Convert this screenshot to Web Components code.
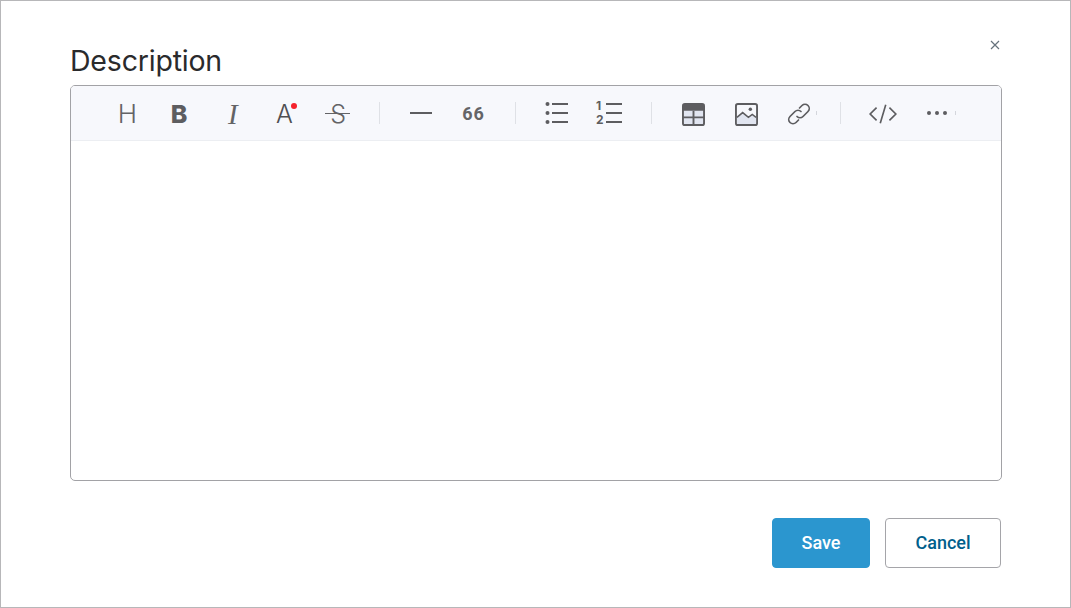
<!DOCTYPE html>
<html lang="en">
<head>
<meta charset="utf-8">
<title>Description</title>
<style>
  html, body { margin: 0; background: #fff; }
</style>
</head>
<body>
<edit-dialog heading="Description">
  <rich-editor></rich-editor>
  <action-button slot="actions" kind="primary">Save</action-button>
  <action-button slot="actions">Cancel</action-button>
</edit-dialog>

<script>
customElements.define(
  "edit-dialog",
  class EditDialog extends HTMLElement {
    constructor() {
      super();
      this.attachShadow({mode: "open"});
    }

    connectedCallback() {
      this.shadowRoot.innerHTML = `
      <style>
        :host {
            display: block;
            position: relative;
            box-sizing: border-box;
            width: 1071px;
            height: 608px;
            padding: 0 69px;
            border: 1px solid #b7b7b9;
            background: #fff;
        }

        .dialog__title {
            margin: 0;
            padding-top: 42px;
            height: 42px;
            font: 400 28.5px/36px Inter, sans-serif;
            letter-spacing: -0.2px;
            color: #2a2a2c;
        }

        .dialog__close {
            position: absolute;
            top: 37px;
            right: 70px;
            width: 10px;
            height: 10px;
            padding: 0;
            border: 0;
            background: none;
        }

        .dialog__actions {
            display: flex;
            justify-content: flex-end;
            gap: 15px;
            margin-top: 37px;
        }
      </style>
      <h1 class="dialog__title">${this.getAttribute("heading")}</h1>
      <button class="dialog__close" aria-label="Close">
        <svg width="10" height="10" viewBox="0 0 10 10" fill="none" stroke="#66727c" stroke-width="1.2">
          <path d="M1 1l8 8M9 1l-8 8"/>
        </svg>
      </button>
      <slot></slot>
      <div class="dialog__actions"><slot name="actions"></slot></div>
      `;
    }
  }
);

customElements.define(
  "tool-button",
  class ToolButton extends HTMLElement {
    constructor() {
      super();
      this.attachShadow({mode: "open"});
    }

    connectedCallback() {
      this.shadowRoot.innerHTML = `
      <style>
        :host {
            display: flex;
            position: relative;
            flex: 0 0 32.7px;
            height: 32px;
            align-items: center;
            justify-content: center;
            color: #5d5d60;
        }
        :host([low]) { padding-top: 2px; box-sizing: border-box; }
        :host([tick])::after {
            content: "";
            position: absolute;
            top: 14px;
            right: -2px;
            width: 1px;
            height: 4px;
            background: #d4d6dc;
        }
      </style>
      <slot></slot>
      `;
    }
  }
);

customElements.define(
  "tool-separator",
  class ToolSeparator extends HTMLElement {
    constructor() {
      super();
      this.attachShadow({mode: "open"});
    }

    connectedCallback() {
      this.shadowRoot.innerHTML = `
      <style>
        :host {
            display: block;
            flex: 0 0 1px;
            height: 22px;
            margin: 0 5px;
            background: #dfe1e6;
        }
      </style>
      `;
    }
  }
);

customElements.define(
  "rich-editor",
  class RichEditor extends HTMLElement {
    constructor() {
      super();
      this.attachShadow({mode: "open"});
    }

    connectedCallback() {
      this.shadowRoot.innerHTML = `
      <style>
        :host {
            display: block;
            box-sizing: border-box;
            width: 932px;
            height: 396px;
            border: 1px solid #a2a2a6;
            border-radius: 5px;
            overflow: hidden;
            background: #fff;
        }

        .toolbar {
            display: flex;
            align-items: center;
            gap: 20px;
            box-sizing: border-box;
            height: 55px;
            padding: 0 0 0 40px;
            background: #f7f8fc;
            border-bottom: 1px solid #eceef2;
        }

        .glyph {
            font-size: 26px;
            line-height: 26px;
        }
        .glyph--h { font-family: Inter, sans-serif; font-weight: 300; color: #636366; }
        .glyph--b { font-family: Inter, sans-serif; font-weight: 800; font-size: 25px; margin-left: -2px; }
        .glyph--i { font-family: "Liberation Serif", serif; font-style: italic; font-size: 29px; color: #636366; }
        .glyph--a { font-family: Inter, sans-serif; font-weight: 300; font-size: 25px; color: #4f4f52; position: relative; margin-left: -2px; }
        .glyph--a::after {
            content: "";
            position: absolute;
            top: 2px;
            right: -4px;
            width: 6px;
            height: 6px;
            border-radius: 50%;
            background: #f5222d;
        }
        .glyph--s { font-family: Inter, sans-serif; font-weight: 300; font-size: 25px; color: #636366; position: relative; }
        .glyph--s::after {
            content: "";
            position: absolute;
            left: -5px;
            right: -4px;
            top: 12px;
            height: 1px;
            background: #636366;
        }
        .glyph--q { font: 700 18px/20px Roboto, sans-serif; letter-spacing: 1px; color: #646467; }
        .ol-nums {
            display: flex;
            flex-direction: column;
            font: 700 12px/14px Inter, sans-serif;
            color: #5d5d60;
            margin-right: 2px;
        }
        .ol-icon { display: flex; align-items: center; margin-left: -2px; }
        .sep-tight { margin-right: 4px; }
        .nudge-right { margin-left: 2px; }
      </style>
      <div class="toolbar">
        <tool-button low><span class="glyph glyph--h">H</span></tool-button>
        <tool-button low><span class="glyph glyph--b">B</span></tool-button>
        <tool-button low><span class="glyph glyph--i">I</span></tool-button>
        <tool-button low><span class="glyph glyph--a">A</span></tool-button>
        <tool-button low><span class="glyph glyph--s">S</span></tool-button>
        <tool-separator class="sep-tight"></tool-separator>
        <tool-button>
          <svg width="24" height="24" viewBox="0 0 24 24"><path d="M1 12h22" stroke="#5d5d60" stroke-width="2"/></svg>
        </tool-button>
        <tool-button low><span class="glyph--q">66</span></tool-button>
        <tool-separator></tool-separator>
        <tool-button>
          <svg width="24" height="24" viewBox="0 0 24 24" fill="#5d5d60">
            <circle cx="2.5" cy="3" r="2"/><circle cx="2.5" cy="12" r="2"/><circle cx="2.5" cy="21" r="2"/>
            <path d="M7 2h16v2H7zM7 11h16v2H7zM7 20h16v2H7z"/>
          </svg>
        </tool-button>
        <tool-button>
          <span class="ol-icon">
            <span class="ol-nums"><span>1</span><span>2</span></span>
            <svg width="16" height="24" viewBox="0 0 16 24" fill="#5d5d60"><path d="M0 2h16v2H0zM0 11h16v2H0zM0 20h16v2H0z"/></svg>
          </span>
        </tool-button>
        <tool-separator></tool-separator>
        <tool-button low>
          <svg width="23" height="23" viewBox="0 0 24 24">
            <rect x="1" y="1" width="22" height="22" rx="2" fill="#e1e5f0" stroke="#5d5d60" stroke-width="2"/>
            <path d="M1 3a2 2 0 0 1 2-2h18a2 2 0 0 1 2 2v5H1z" fill="#5d5d60"/>
            <path d="M12 8v15M1 15h22" stroke="#5d5d60" stroke-width="2"/>
          </svg>
        </tool-button>
        <tool-button low>
          <svg width="23" height="23" viewBox="0 0 24 24">
            <rect x="1" y="1" width="22" height="22" rx="2" fill="#f7f8fc" stroke="#5d5d60" stroke-width="2"/>
            <path d="M2 15l6-5 6 5 4-3 4 3v7H2z" fill="#e1e5f0"/>
            <path d="M2 15l6-5 6 5 4-3 4 3" fill="none" stroke="#5d5d60" stroke-width="1.6"/>
            <circle cx="16" cy="6.500" r="1.8" fill="#5d5d60"/>
          </svg>
        </tool-button>
        <tool-button tick low>
          <svg width="24" height="24" viewBox="0 0 24 24" fill="none" stroke="#5d5d60" stroke-width="1.7" stroke-linecap="round">
            <path d="M10 14.500a4.200 4.200 0 0 0 6 0l5-5a4.200 4.200 0 0 0-6-6l-2.500 2.500"/>
            <path d="M14 9.500a4.200 4.200 0 0 0-6 0l-5 5a4.200 4.200 0 0 0 6 6l2.500-2.500"/>
          </svg>
        </tool-button>
        <tool-separator></tool-separator>
        <tool-button low>
          <svg width="32" height="22" viewBox="0 0 32 24" fill="none" stroke="#5d5d60" stroke-width="1.8">
            <path d="M9 5l-7 7 7 7M23 5l7 7-7 7M19 2l-6 20"/>
          </svg>
        </tool-button>
        <tool-button tick class="nudge-right">
          <svg width="24" height="24" viewBox="0 0 24 24" fill="#5d5d60">
            <circle cx="4" cy="12" r="2"/><circle cx="12" cy="12" r="2"/><circle cx="20" cy="12" r="2"/>
          </svg>
        </tool-button>
      </div>
      `;
    }
  }
);

customElements.define(
  "action-button",
  class ActionButton extends HTMLElement {
    constructor() {
      super();
      this.attachShadow({mode: "open"});
    }

    connectedCallback() {
      const primary = this.getAttribute("kind") === "primary";
      this.shadowRoot.innerHTML = `
      <style>
        :host { display: block; }

        button {
            display: block;
            box-sizing: border-box;
            width: ${primary ? 98 : 116}px;
            height: 50px;
            border-radius: 4px;
            border: 1px solid ${primary ? "#2b96cf" : "#a5a5a9"};
            background: ${primary ? "#2b96cf" : "#fff"};
            color: ${primary ? "#fff" : "#005f8c"};
            font: 500 18px/22px Roboto, sans-serif;
            padding: 0;
        }
      </style>
      <button><slot></slot></button>
      `;
    }
  }
);
</script>
</body>
</html>
